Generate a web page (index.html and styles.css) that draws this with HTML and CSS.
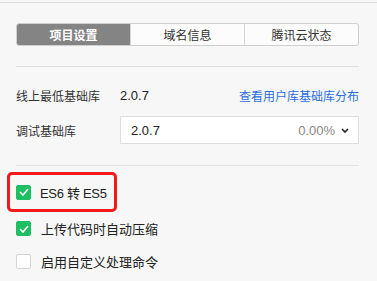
FILE: index.html
```html
<!DOCTYPE html>
<html lang="zh-CN">
<head>
    <meta charset="UTF-8">
    <link rel="stylesheet" href="styles.css">
</head>
<body>
    <div class="panel">
        <div class="tabs-section">
            <div class="tabs">
                <div class="tab active">项目设置</div>
                <div class="tab">域名信息</div>
                <div class="tab">腾讯云状态</div>
            </div>
        </div>

        <div class="lib-section">
            <div class="row">
                <span class="label">线上最低基础库</span>
                <span class="value">2.0.7</span>
                <a class="link" href="#">查看用户库基础库分布</a>
            </div>
            <div class="row">
                <span class="label">调试基础库</span>
                <div class="select">
                    <span class="select-value">2.0.7</span>
                    <span class="select-pct">0.00%</span>
                    <svg class="chevron" width="8" height="5" viewBox="0 0 8 5">
                        <path d="M1 1 L4 4 L7 1" fill="none" stroke="#222" stroke-width="1.6"/>
                    </svg>
                </div>
            </div>
        </div>

        <div class="options">
            <div class="option highlight">
                <span class="check on">
                    <svg width="10" height="8" viewBox="0 0 10 8"><path d="M1 4 L4 7 L9 1" fill="none" stroke="#fff" stroke-width="1.6"/></svg>
                </span>
                <span class="tight">ES6 转 ES5</span>
            </div>
            <div class="option">
                <span class="check on">
                    <svg width="10" height="8" viewBox="0 0 10 8"><path d="M1 4 L4 7 L9 1" fill="none" stroke="#fff" stroke-width="1.6"/></svg>
                </span>
                <span>上传代码时自动压缩</span>
            </div>
            <div class="option">
                <span class="check"></span>
                <span>启用自定义处理命令</span>
            </div>
        </div>
    </div>
</body>
</html>
```

FILE: styles.css
```css
* {
    margin: 0;
    padding: 0;
    box-sizing: border-box;
}

body {
    margin: 0;
    background: #f7f7f7;
    font-family: "Liberation Sans", "Noto Sans CJK SC", sans-serif;
    font-size: 12px;
    color: #222;
}

.panel {
    margin-top: 2px;
    border-top: 1px solid #dcdcdc;
    padding: 0 18px 0 16px;
}

.tabs-section {
    padding: 20px 0 20px;
    border-bottom: 1px solid #dedede;
}

.tabs {
    display: flex;
    height: 23px;
    border: 1px solid #cfcfcf;
    border-radius: 3px;
    overflow: hidden;
    background: #fcfcfc;
}

.tab {
    flex: 1;
    display: flex;
    align-items: center;
    justify-content: center;
    font-size: 12px;
    color: #333;
    border-left: 1px solid #d6d6d6;
}

.tab:first-child {
    border-left: none;
}

.tab.active {
    background: #848484;
    color: #fff;
    font-weight: bold;
}

.lib-section {
    padding: 14px 0 21px;
    border-bottom: 1px solid #e2e2e2;
}

.row {
    display: flex;
    align-items: center;
    height: 28px;
}

.row + .row {
    margin-top: 7px;
}

.label {
    width: 104px;
    color: #333;
}

.value {
    flex: 1;
    font-size: 13px;
}

.link {
    color: #2b6de0;
    text-decoration: none;
}

.select {
    flex: 1;
    display: flex;
    align-items: center;
    height: 28px;
    background: #fff;
    border: 1px solid #dedede;
    padding: 0 9px 0 10px;
    font-size: 13px;
}

.select-value {
    flex: 1;
}

.select-pct {
    color: #888;
}

.chevron {
    margin-left: 6px;
}

.options {
    padding-top: 6px;
    font-size: 13px;
}

.option {
    display: flex;
    align-items: center;
    height: 33px;
    gap: 10px;
}

.option.highlight {
    width: 110px;
    height: 40px;
    margin-left: -9px;
    padding: 0 0 0 6px;
    border: 3px solid #f0191c;
    border-radius: 5px;
    white-space: nowrap;
    gap: 9px;
}

.tight {
    letter-spacing: -0.3px;
}

.check {
    flex-shrink: 0;
    width: 15px;
    height: 15px;
    border-radius: 2px;
    border: 1px solid #d4d4d4;
    background: #fff;
    display: flex;
    align-items: center;
    justify-content: center;
}

.check.on {
    border-color: #1dbf61;
    background: #1dbf61;
}
```
